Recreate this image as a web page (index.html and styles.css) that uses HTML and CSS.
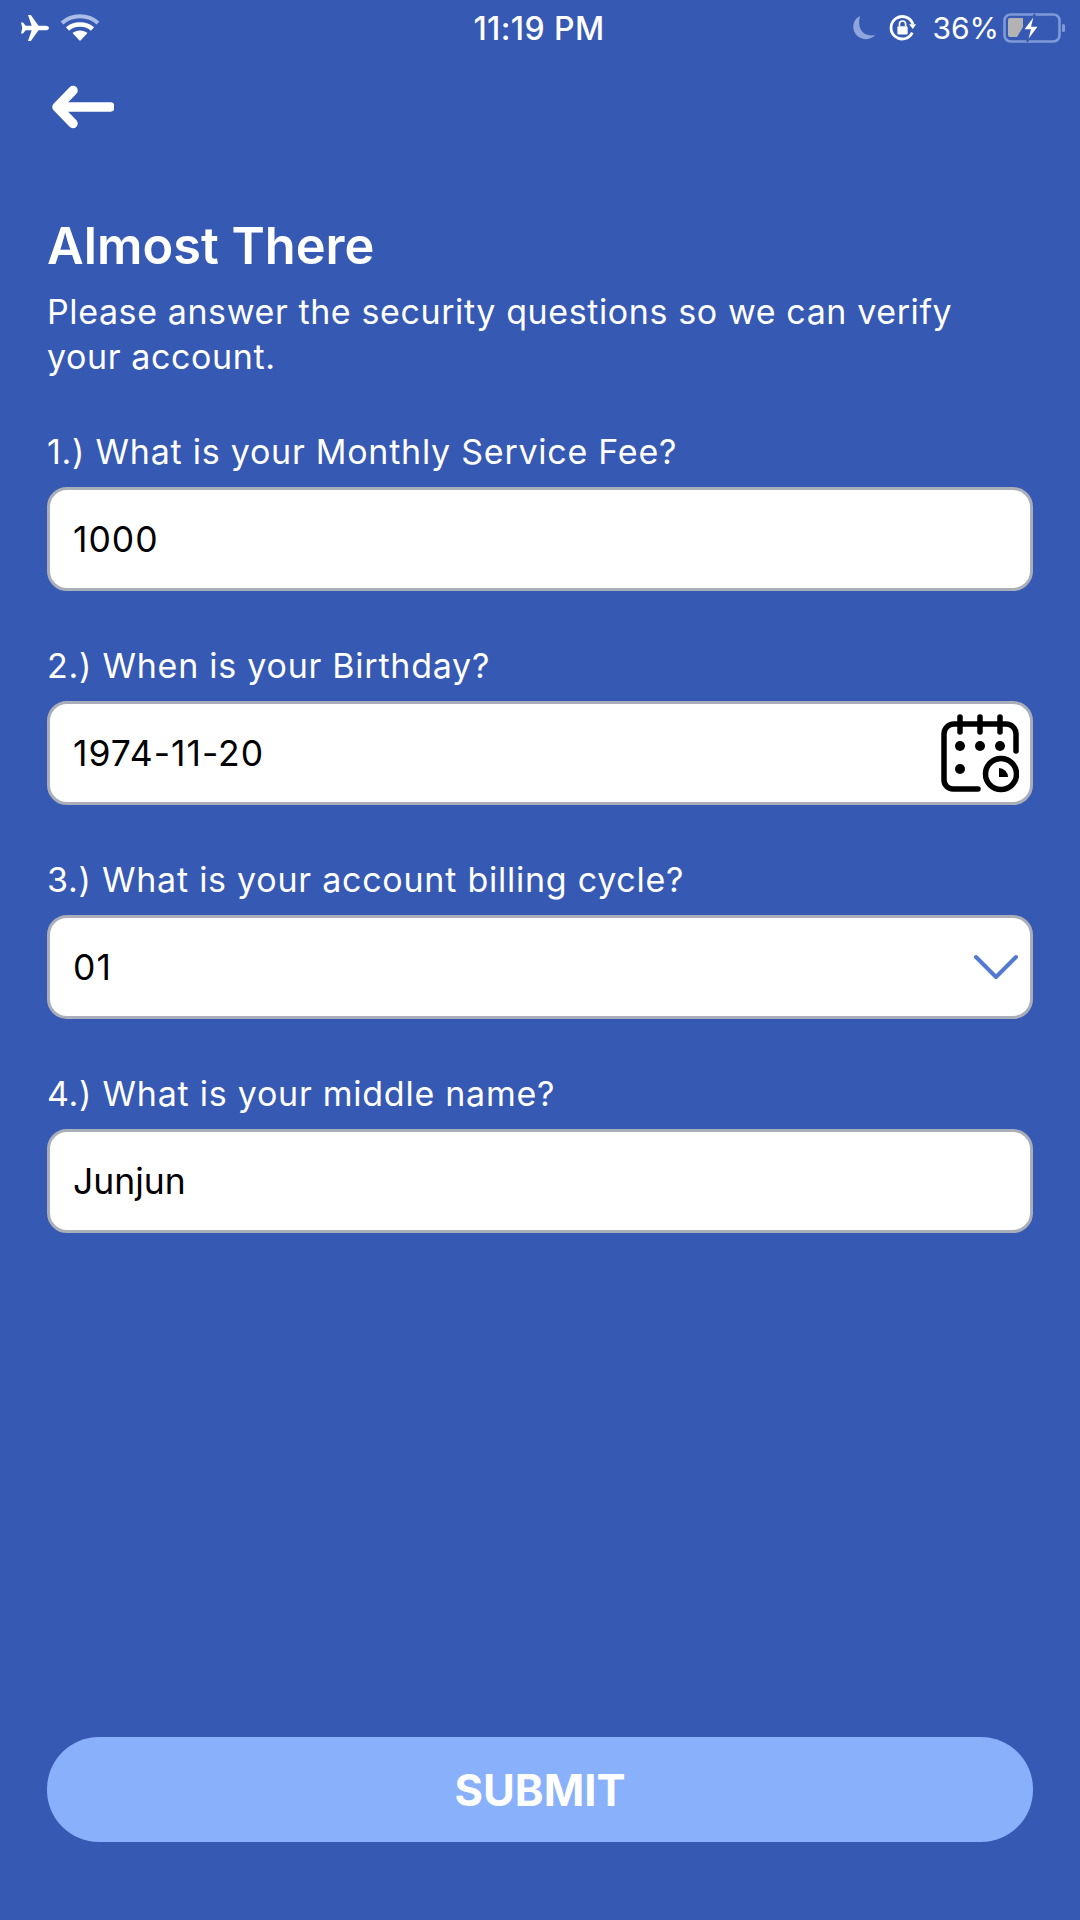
FILE: index.html
```html
<!DOCTYPE html>
<html lang="en">
<head>
  <meta charset="UTF-8">
  <meta name="viewport" content="width=device-width, initial-scale=1.0">
  <title>Almost There</title>
  <link rel="stylesheet" href="styles.css">
</head>
<body>
  <div class="status">
    <div class="status-side">
      <svg class="ic-plane" width="30" height="28" viewBox="0 0 30 28"><path fill="#fff" d="M29 14c0-1.500-1.800-2.300-3.500-2.300h-7L10.800 1h-2.800l3.700 10.700H5.700L3 8.500H1l1.300 5.500L1 19.500h2l2.700-3.200h6L8 27h2.800l7.700-10.700h7c1.700 0 3.500-.8 3.500-2.300z"/></svg>
      <svg class="ic-wifi" width="40" height="30" viewBox="0 0 40 30">
        <path d="M2 10C12 1 28 1 38 10" fill="none" stroke="#a9bde6" stroke-width="4"/>
        <path d="M7.500 16C14 10 26 10 32.500 16" fill="none" stroke="#fff" stroke-width="4.500"/>
        <path fill="#fff" d="M12.500 20c4-3.500 11-3.500 15 0L20 28z"/>
      </svg>
    </div>
    <div class="status-time">11:19 PM</div>
    <div class="status-side status-right">
      <svg class="ic-moon" width="26" height="26" viewBox="0 0 26 26"><path fill="#8fa6dc" d="M9 1C3 4 1 10 3 16c2.500 7 11 10 17 7 1.500-.7 3-1.800 4-3-7 1.500-13-1.500-15-7C7.800 9 8 5 9 1z"/></svg>
      <svg class="ic-lock" width="28" height="28" viewBox="0 0 30 30">
        <path d="M25 20a12 12 0 1 1 .6-9" fill="none" stroke="#fff" stroke-width="3"/>
        <path fill="#fff" d="M21.500 11h7.500l-3.500 5z"/>
        <rect x="9" y="13" width="11" height="9" rx="1.500" fill="#fff"/>
        <path d="M11.200 13v-2.200a3.300 3.300 0 0 1 6.600 0V13" fill="none" stroke="#fff" stroke-width="1.800"/>
      </svg>
      <span class="status-pct">36%</span>
      <svg class="ic-batt" width="63" height="30" viewBox="0 0 63 30">
        <rect x="1.500" y="1.500" width="55" height="27" rx="6" fill="none" stroke="#7f9bd8" stroke-width="2.600"/>
        <rect x="59" y="11" width="3" height="8" rx="1.500" fill="#7f9bd8"/>
        <path fill="#b3b3b3" d="M5 7a2 2 0 0 1 2-2h13v9l-6 10H7a2 2 0 0 1-2-2z"/>
        <path fill="#fff" stroke="#3659b3" stroke-width="1.500" d="M32 1 20 17h7l-3 12 12-16h-7z"/>
      </svg>
    </div>
  </div>

  <div class="back">
    <svg width="64" height="46" viewBox="0 0 64 46"><path d="M60.500 23H7M23 6.500 7 23l16 16.500" fill="none" stroke="#fff" stroke-width="9.500" stroke-linecap="round" stroke-linejoin="round"/></svg>
  </div>

  <h1 class="title">Almost There</h1>
  <p class="intro">Please answer the security questions so we can verify your account.</p>

  <form class="questions">
    <div class="question">
      <label class="q-label">1.) What is your Monthly Service Fee?</label>
      <div class="field field-num">1000</div>
    </div>
    <div class="question">
      <label class="q-label">2.) When is your Birthday?</label>
      <div class="field field-num">
        1974-11-20
        <svg class="ic-cal" width="78" height="79" viewBox="0 0 78 79">
          <g fill="none" stroke="#000" stroke-width="5.500" stroke-linecap="round">
            <path d="M19 3v15M39 3v15M59 3v15"/>
            <path d="M75 37V20a10 10 0 0 0-10-10H13A10 10 0 0 0 3 20v46a9 9 0 0 0 9 9h25"/>
            <circle cx="60" cy="60" r="15.500"/>
          </g>
          <circle cx="19" cy="32" r="5"/>
          <circle cx="39" cy="32" r="5"/>
          <circle cx="59" cy="32" r="5"/>
          <circle cx="19" cy="55" r="5"/>
          <path d="M58 54v9h9a9 9 0 0 0-9-9z"/>
        </svg>
      </div>
    </div>
    <div class="question">
      <label class="q-label">3.) What is your account billing cycle?</label>
      <div class="field field-num">
        01
        <svg class="ic-chev" width="46" height="28" viewBox="0 0 46 28"><path d="M3 4l20 20L43 4" fill="none" stroke="#5379cf" stroke-width="4" stroke-linecap="round" stroke-linejoin="round"/></svg>
      </div>
    </div>
    <div class="question">
      <label class="q-label">4.) What is your middle name?</label>
      <div class="field">Junjun</div>
    </div>
  </form>

  <div class="submit">SUBMIT</div>
</body>
</html>
```

FILE: styles.css
```css
*{
  margin: 0;
  padding: 0;
  box-sizing: border-box;
}
html,body{
  height: 100%;
}
body{
  display: flex;
  flex-direction: column;
  padding: 0 47px;
  background-color: #3659b3;
  color: white;
  font-family: Inter, "Liberation Sans", sans-serif;
}
.status{
  display: flex;
  align-items: center;
  justify-content: space-between;
  height: 56px;
  margin: 0 -33px 0 -27px;
}
.status-side{
  display: flex;
  align-items: center;
  gap: 10px;
  width: 220px;
}
.status-right{
  justify-content: flex-end;
  gap: 15px;
  width: 228px;
}
.status-time{
  font-size: 32px;
  font-weight: 500;
  letter-spacing: .4px;
}
.status-pct{
  font-size: 30px;
  margin-right: -11px;
}
.ic-moon{
  margin-right: -3px;
}
.back{
  height: 46px;
  margin: 28px 0 0 3px;
}
.title{
  margin-top: 86px;
  font-size: 50.5px;
  line-height: 60px;
  font-weight: 600;
}
.intro{
  margin-top: 13px;
  font-size: 34px;
  line-height: 45px;
  letter-spacing: .6px;
}
.questions{
  display: flex;
  flex-direction: column;
  gap: 53px;
  margin-top: 51px;
}
.q-label{
  display: block;
  font-size: 34px;
  line-height: 44px;
  letter-spacing: .75px;
  margin-bottom: 13px;
}
.field{
  display: flex;
  align-items: center;
  justify-content: space-between;
  height: 104px;
  padding: 0 11px 0 23px;
  border: 3px solid #a9aeb8;
  border-radius: 20px;
  background-color: white;
  color: black;
  font-size: 35.5px;
}
.field-num{
  letter-spacing: 1px;
}
.submit{
  display: flex;
  align-items: center;
  justify-content: center;
  height: 105px;
  margin-top: auto;
  margin-bottom: 78px;
  border-radius: 52px;
  background-color: #89b0fb;
  font-size: 43.5px;
  font-weight: 700;
}
```
